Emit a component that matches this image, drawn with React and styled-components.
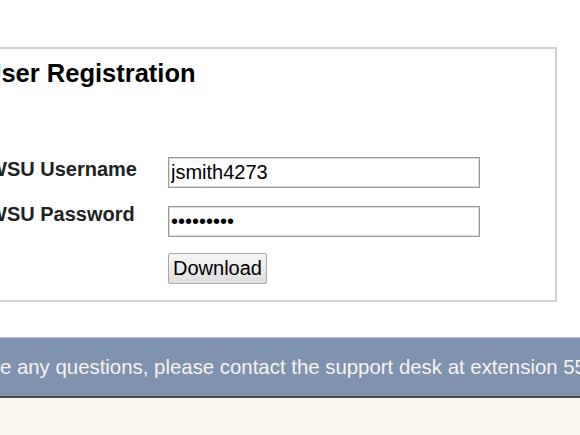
import React from "react";
import styled, { createGlobalStyle } from "styled-components";

const GlobalStyle = createGlobalStyle`
  html, body {
    margin: 0;
    padding: 0;
    overflow: hidden;
    background: #ffffff;
  }
  body {
    font-family: "Liberation Sans", Arial, sans-serif;
  }
`;

const Page = styled.div`
  display: flex;
  flex-direction: column;
  min-height: 100vh;
  width: 700px;
  margin-left: -100px;
`;

const Content = styled.div`
  padding: 47px 0 35px 60px;
  background: #ffffff;
`;

const Panel = styled.div`
  box-sizing: border-box;
  width: 597px;
  height: 255px;
  border: 2px solid #d0d0d0;
  padding: 10px 28px 0 26px;
`;

const Title = styled.h2`
  margin: 0 0 0 -5px;
  font-size: 25.5px;
  font-weight: bold;
  color: #000;
  line-height: 29px;
`;

const Form = styled.div`
  display: grid;
  grid-template-columns: 180px 312px;
  grid-auto-rows: 31px;
  row-gap: 18px;
  margin-top: 69px;
`;

const Label = styled.label`
  font-size: 20px;
  font-weight: bold;
  color: #222;
  line-height: 22px;
  margin-top: ${(p) => p.$shift}px;
`;

const Input = styled.input`
  box-sizing: border-box;
  width: 312px;
  height: 31px;
  margin: 0;
  padding: 0 2px;
  border: 1px solid #9a9a9a;
  box-shadow: inset 0 0 0 1px #dcdcdc;
  font-family: "Liberation Sans", Arial, sans-serif;
  font-size: 20px;
  color: #000;
  background: #fff;
  outline: none;
`;

const Button = styled.button`
  grid-column: 2;
  justify-self: start;
  box-sizing: border-box;
  height: 31px;
  margin-top: -2px;
  padding: 0 4px;
  border: 1px solid #a8a8a8;
  border-radius: 2px;
  background: linear-gradient(#f6f6f6, #dedede);
  font-family: "Liberation Sans", Arial, sans-serif;
  font-size: 20px;
  color: #000;
`;

const Footer = styled.div`
  height: 58px;
  display: flex;
  align-items: center;
  padding-left: 11.5px;
  background: #7f93ae;
  border-top: 1px solid #b4bccb;
  border-bottom: 2px solid #4a4d52;
  color: #f4f4f4;
  font-size: 20.4px;
  white-space: nowrap;
`;

const Filler = styled.div`
  flex: 1;
  background: #f9f6ec;
`;

export default function App() {
  return (
    <>
      <GlobalStyle />
      <Page>
        <Content>
          <Panel>
            <Title>User Registration</Title>
            <Form>
              <Label $shift={1}>WSU Username</Label>
              <Input type="text" defaultValue="jsmith4273" readOnly />
              <Label $shift={-3}>WSU Password</Label>
              <Input type="password" defaultValue="123456789" readOnly />
              <Button>Download</Button>
            </Form>
          </Panel>
        </Content>
        <Footer>
          If you have any questions, please contact the support desk at extension 5555.
        </Footer>
        <Filler />
      </Page>
    </>
  );
}
